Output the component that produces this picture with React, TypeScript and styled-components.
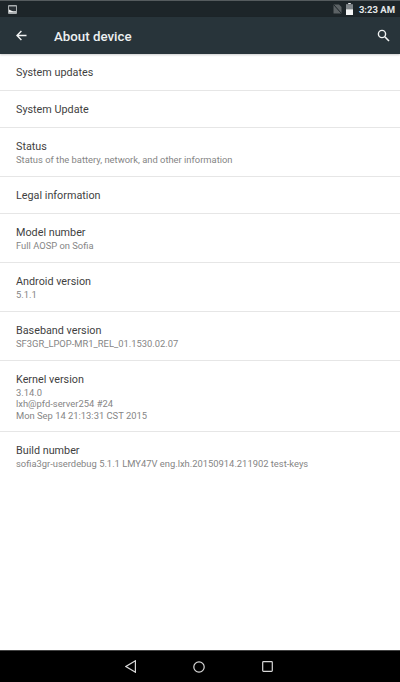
import React from "react";
import styled, { createGlobalStyle } from "styled-components";

const Global = createGlobalStyle`
  html, body { margin: 0; padding: 0; background: #fff; }
  #root { width: 400px; height: 682px; overflow: hidden; }
`;

const Screen = styled.div`
  width: 400px;
  height: 682px;
  display: flex;
  flex-direction: column;
  font-family: Roboto, "Liberation Sans", sans-serif;
  background: #fff;
`;

const StatusBar = styled.div`
  height: 17px;
  flex: none;
  background: #1d2529;
  border-top: 1px solid #555b5e;
  box-sizing: border-box;
  display: flex;
  align-items: center;
  padding: 0 5px 0 8px;
  color: #e8eaeb;
`;

const StatusRight = styled.div`
  margin-left: auto;
  display: flex;
  align-items: center;
  gap: 4px;
`;

const Clock = styled.span`
  font-size: 9.5px;
  font-weight: 700;
  margin-left: 2px;
  color: #e4e7e8;
`;

const AppBar = styled.div`
  height: 37px;
  flex: none;
  background: #28343a;
  display: flex;
  align-items: center;
  padding: 0 10px 0 16px;
  color: #f2f4f4;
  box-shadow: 0 1px 2px rgba(0, 0, 0, 0.2);
  position: relative;
`;

const Title = styled.span`
  font-size: 13.3px;
  font-weight: 500;
  margin-left: 27px;
  padding-top: 1px;
  color: #eceff0;
`;

const SearchWrap = styled.div`
  margin-left: auto;
  display: flex;
`;

const List = styled.div`
  flex: 1;
  display: flex;
  flex-direction: column;
`;

const Row = styled.div<{ $h: number }>`
  height: ${(p) => p.$h}px;
  box-sizing: border-box;
  flex: none;
  display: flex;
  flex-direction: column;
  justify-content: center;
  padding: 1px 16px 0;
  border-bottom: 1px solid #e6e6e6;
`;

const PlainRow = styled(Row)`
  border-bottom: none;
  padding: 0 16px 1px;
`;

const RowTitle = styled.div`
  font-size: 10.8px;
  line-height: 15px;
  color: #3f3f3f;
`;

const RowSub = styled.div`
  font-size: 9.4px;
  line-height: 11.5px;
  color: #858585;
  white-space: nowrap;
`;

const NavBar = styled.div`
  height: 32px;
  flex: none;
  background: #000;
  border-top: 1px solid #444;
  box-sizing: border-box;
  display: flex;
  align-items: center;
  justify-content: center;
  gap: 57px;
  padding-right: 3px;
`;

const rows = [
  { t: "System updates", h: 37 },
  { t: "System Update", h: 37 },
  { t: "Status", s: ["Status of the battery, network, and other information"], h: 49 },
  { t: "Legal information", h: 37 },
  { t: "Model number", s: ["Full AOSP on Sofia"], h: 49 },
  { t: "Android version", s: ["5.1.1"], h: 49 },
  { t: "Baseband version", s: ["SF3GR_LPOP-MR1_REL_01.1530.02.07"], h: 49 },
  { t: "Kernel version", s: ["3.14.0", "lxh@pfd-server254 #24", "Mon Sep 14 21:13:31 CST 2015"], h: 71 },
];

export default function App() {
  return (
    <Screen>
      <Global />
      <StatusBar>
        <svg width="9" height="9" viewBox="0 0 9 9">
          <rect x="0" y="0" width="9" height="9" rx="1" fill="#a9aeb0" />
          <rect x="1" y="1.5" width="7" height="6" fill="#2a3136" />
          <path d="M1 7.5 L1 4.5 L3.5 5.8 L5 6.3 L8 6.3 L8 7.5 Z" fill="#f2f3f3" />
        </svg>
        <StatusRight>
          <svg width="9" height="10" viewBox="0 0 9 10">
            <path d="M0.5 0.5 H6 L8.5 3 V9.5 H0.5 Z" fill="#5c6265" />
            <path d="M0.5 0.5 L8.5 9.5" stroke="#1d2529" strokeWidth="1" />
          </svg>
          <svg width="7" height="12" viewBox="0 0 7 12">
            <rect x="2.2" y="0" width="2.6" height="1.2" fill="#e8eaeb" />
            <rect x="0" y="1.2" width="7" height="10.8" fill="#80868a" />
            <rect x="0" y="6.4" width="7" height="5.6" fill="#f4f5f5" />
          </svg>
          <Clock>3:23 AM</Clock>
        </StatusRight>
      </StatusBar>
      <AppBar>
        <svg width="11" height="11" viewBox="0 0 11 11">
          <path d="M10.5 5.5 H1.2 M5.4 1 L1 5.5 L5.4 10" fill="none" stroke="#f2f4f4" strokeWidth="1.4" />
        </svg>
        <Title>About device</Title>
        <SearchWrap>
          <svg width="13" height="13" viewBox="0 0 13 13">
            <circle cx="5" cy="5" r="3.6" fill="none" stroke="#f2f4f4" strokeWidth="1.4" />
            <path d="M7.8 7.8 L12 12" stroke="#f2f4f4" strokeWidth="1.6" />
          </svg>
        </SearchWrap>
      </AppBar>
      <List>
        {rows.map((r) => (
          <Row key={r.t} $h={r.h}>
            <RowTitle>{r.t}</RowTitle>
            {r.s?.map((l) => <RowSub key={l}>{l}</RowSub>)}
          </Row>
        ))}
        <PlainRow $h={49}>
          <RowTitle>Build number</RowTitle>
          <RowSub>sofia3gr-userdebug 5.1.1 LMY47V eng.lxh.20150914.211902 test-keys</RowSub>
        </PlainRow>
      </List>
      <NavBar>
        <svg width="11" height="13" viewBox="0 0 11 13">
          <path d="M10.4 0.8 V12.2 L0.9 6.5 Z" fill="none" stroke="#d8d8d8" strokeWidth="1.2" />
        </svg>
        <svg width="12" height="12" viewBox="0 0 12 12">
          <circle cx="6" cy="6" r="5.2" fill="none" stroke="#d8d8d8" strokeWidth="1.2" />
        </svg>
        <svg width="11" height="11" viewBox="0 0 11 11">
          <rect x="0.7" y="0.7" width="9.6" height="9.6" rx="0.8" fill="none" stroke="#d8d8d8" strokeWidth="1.2" />
        </svg>
      </NavBar>
    </Screen>
  );
}
